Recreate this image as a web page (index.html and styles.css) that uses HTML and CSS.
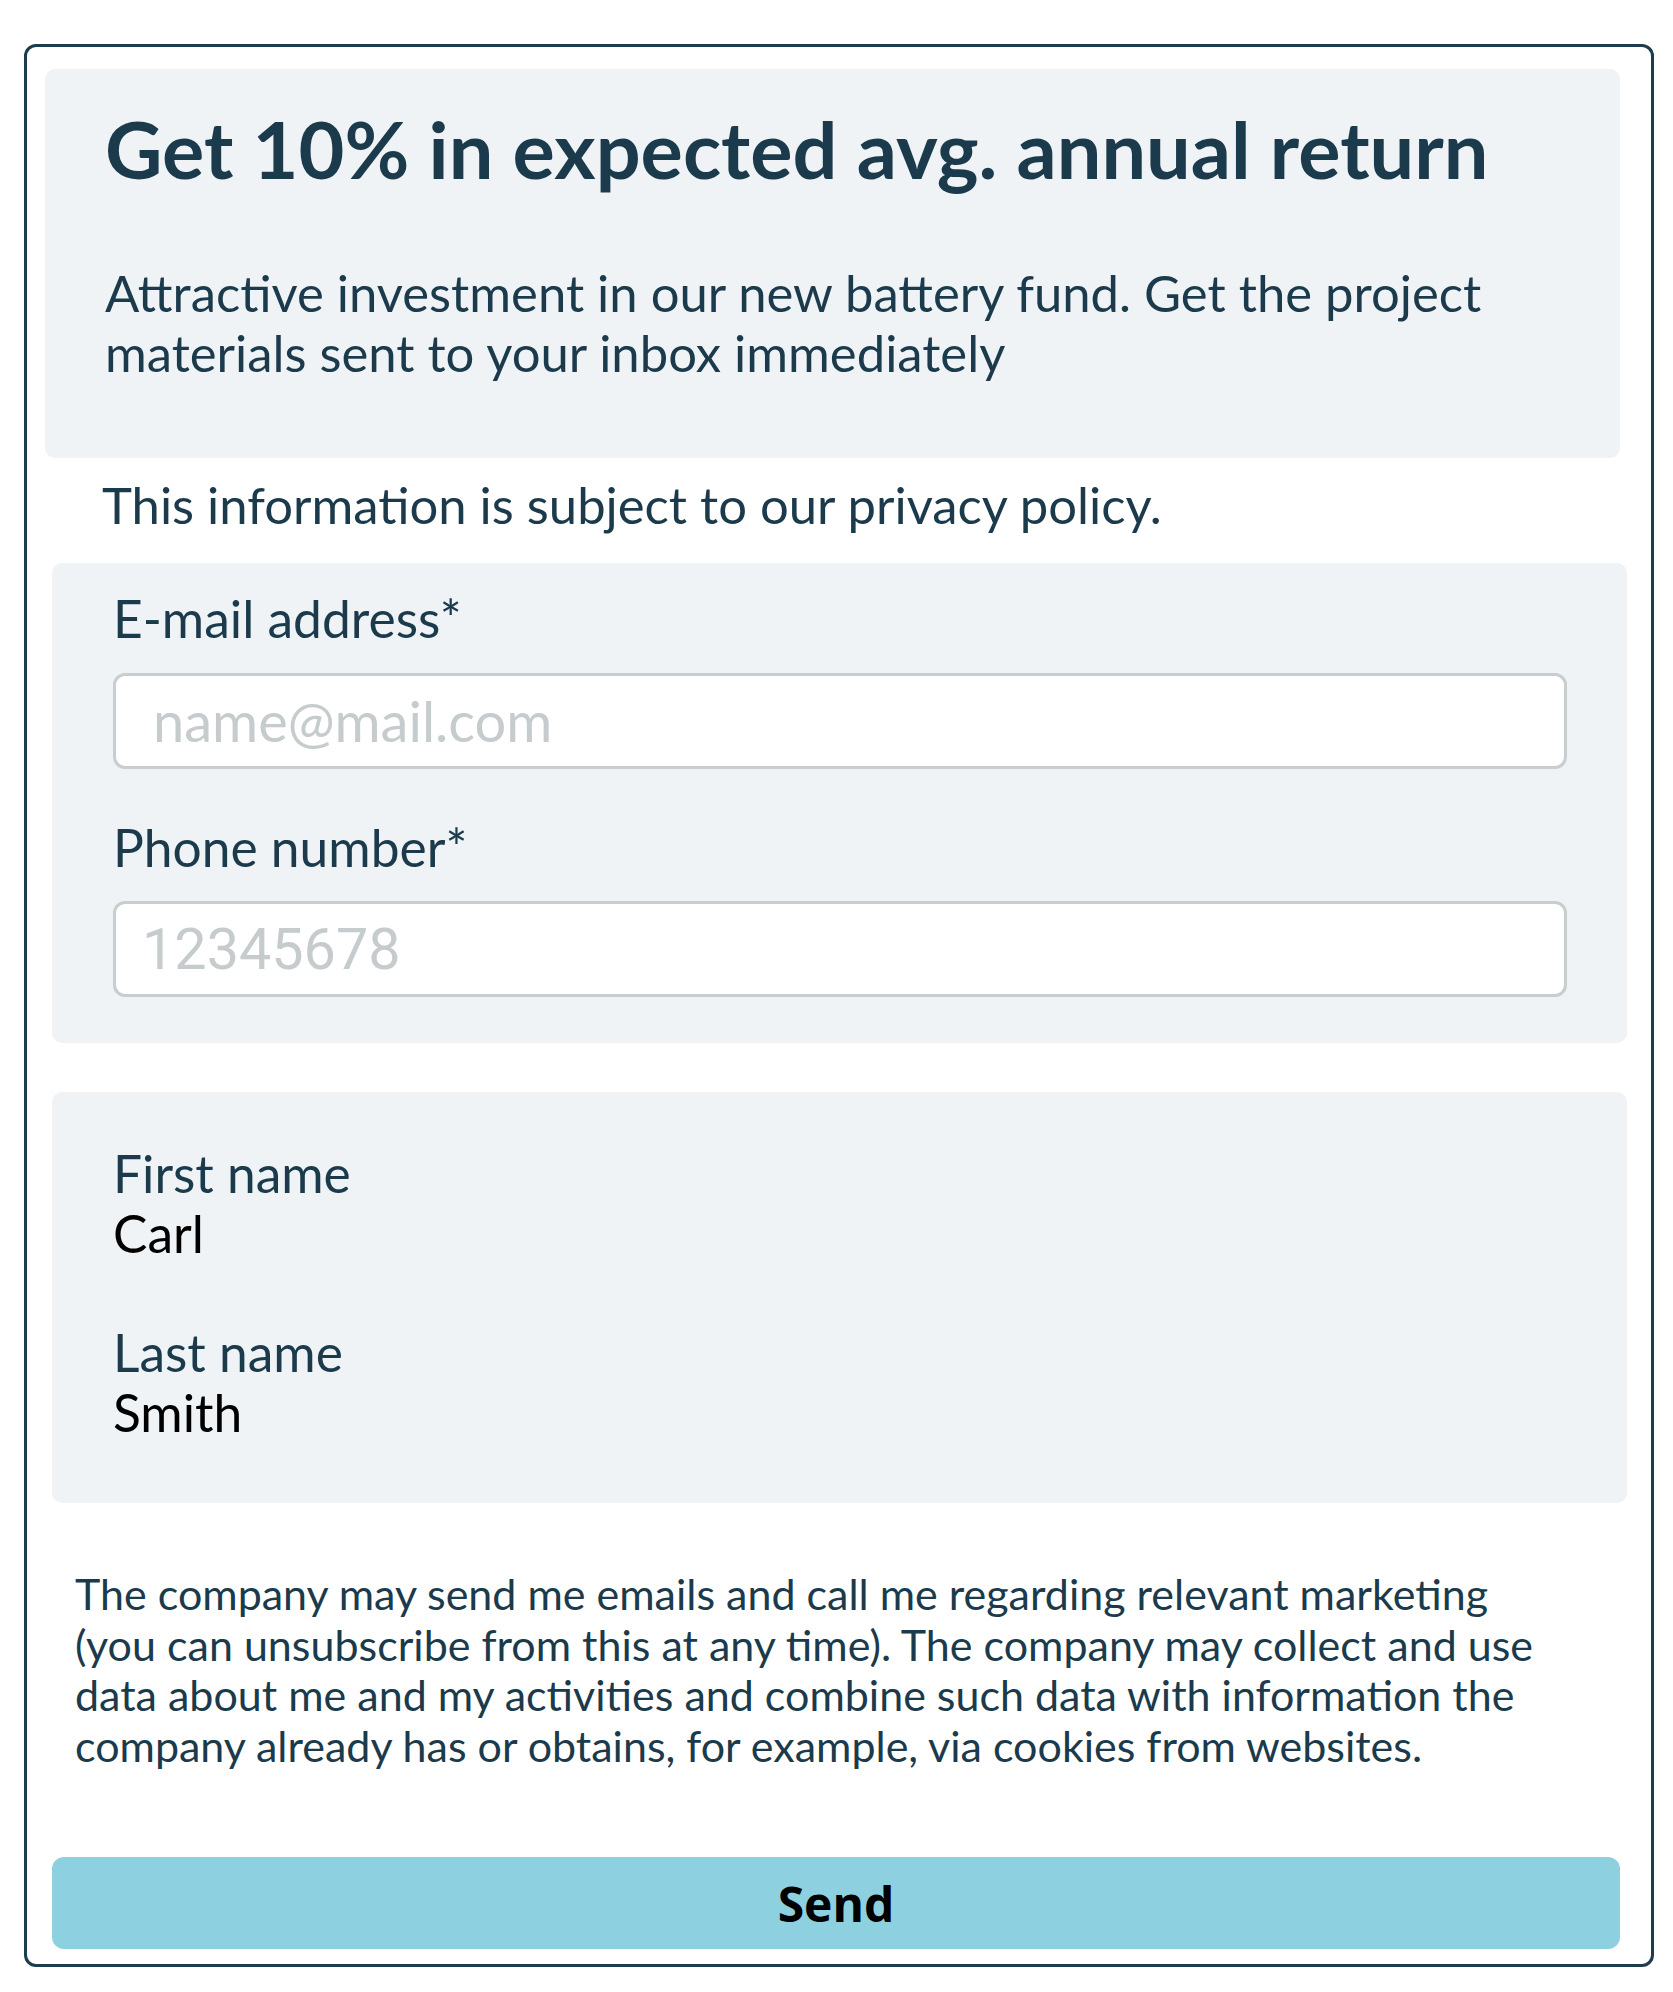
FILE: index.html
```html
<!DOCTYPE html>
<html lang="en">
<head>
    <meta charset="UTF-8">
    <meta name="viewport" content="width=device-width, initial-scale=1.0">
    <title>Battery fund</title>
    <link rel="stylesheet" href="styles.css">
</head>
<body>
    <div class="card">
        <div class="hero">
            <h1>Get 10% in expected avg. annual return</h1>
            <p>Attractive investment in our new battery fund. Get the project materials sent to your inbox immediately</p>
        </div>
        <p class="privacy">This information is subject to our privacy policy.</p>
        <form class="signup" onsubmit="return false">
            <div class="panel fields">
                <div class="field">
                    <label for="email">E-mail address*</label>
                    <input type="email" id="email" placeholder="name@mail.com">
                </div>
                <div class="field">
                    <label for="phone">Phone number*</label>
                    <input type="tel" id="phone" class="tel" placeholder="12345678">
                </div>
            </div>
            <div class="panel names">
                <div class="name-row">
                    <div class="name-label">First name</div>
                    <div class="name-value">Carl</div>
                </div>
                <div class="name-row">
                    <div class="name-label">Last name</div>
                    <div class="name-value">Smith</div>
                </div>
            </div>
            <p class="consent">The company may send me emails and call me regarding relevant marketing (you can unsubscribe from this at any time). The company may collect and use data about me and my activities and combine such data with information the company already has or obtains, for example, via cookies from websites.</p>
            <button type="submit">Send</button>
        </form>
    </div>
</body>
</html>
```
FILE: styles.css
```css
body {
    font-family: Lato, "Noto Sans", sans-serif;
    color: #1b3a4b;
    margin: 0;
    padding: 44px 19px 27px 24px;
    background: #fff;
}
.card {
    border: 3px solid #1d3c4c;
    border-radius: 12px;
    padding: 22px 24px 15px 25px;
}
.hero {
    background: #eff3f6;
    border-radius: 10px;
    margin: 0 7px 0 -7px;
    padding: 33px 60px 75px 60px;
}
.hero h1 {
    margin: 0;
    font-size: 79.2px;
    font-weight: 700;
    line-height: 94px;
}
.hero p {
    margin: 67px 0 0;
    font-size: 50.8px;
    line-height: 60px;
}
.privacy {
    margin: 22px 0 0;
    padding-left: 50px;
    font-size: 50.8px;
    line-height: 50px;
}
.panel {
    background: #eff3f6;
    border-radius: 10px;
}
.fields {
    margin-top: 33px;
    padding: 30px 60px 46px 61px;
}
.field + .field {
    margin-top: 53px;
}
.field label {
    display: block;
    font-size: 51.5px;
    line-height: 50px;
    margin-bottom: 29.5px;
}
.field input {
    display: block;
    box-sizing: border-box;
    width: 100%;
    height: 96px;
    border: 3px solid #c8cdd0;
    border-radius: 12px;
    background: #fff;
    padding: 0 20px 0 37px;
    font-family: Lato, sans-serif;
    font-size: 56px;
    color: #1b3a4b;
    outline: none;
}
.field input.tel {
    font-family: Roboto, sans-serif;
    font-size: 57.5px;
    padding-left: 26px;
}
.field input::placeholder {
    color: #c6ccce;
}
.names {
    margin-top: 49px;
    padding: 51px 61px 61px;
}
.name-row {
    font-size: 51.5px;
    line-height: 60px;
}
.name-row + .name-row {
    margin-top: 59px;
}
.name-value {
    color: #000;
}
.consent {
    margin: 66px 0 0;
    padding: 0 77px 0 23px;
    font-size: 43px;
    line-height: 50.5px;
}
button {
    display: block;
    width: calc(100% - 7px);
    height: 92px;
    margin-top: 86px;
    border: none;
    border-radius: 12px;
    background: #8dd0df;
    color: #000;
    font-family: "Open Sans", sans-serif;
    font-size: 48px;
    font-weight: 700;
    cursor: pointer;
}
```
